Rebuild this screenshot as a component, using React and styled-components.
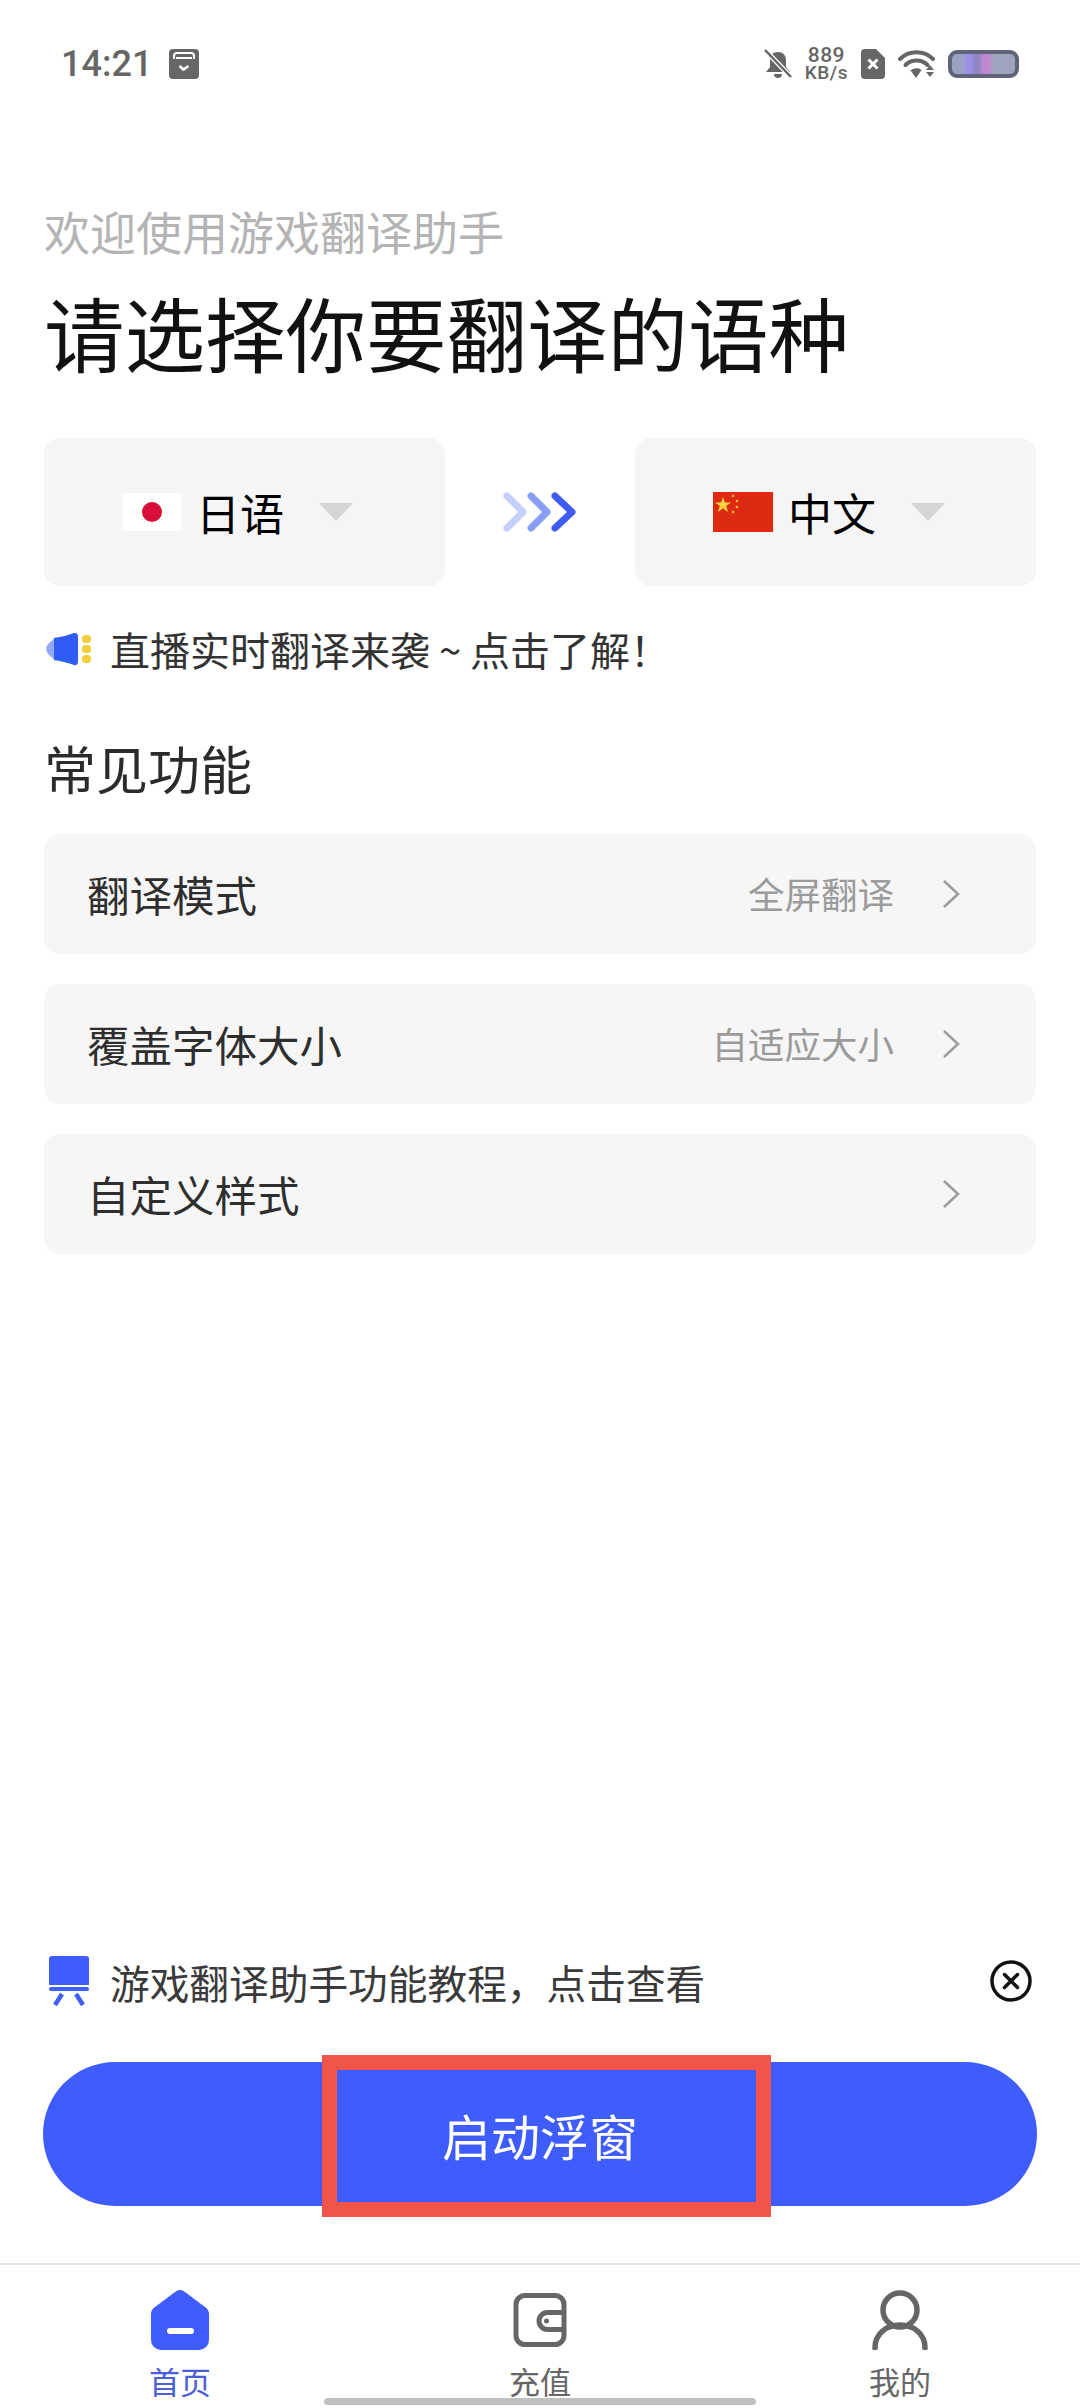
import React from "react";
import styled, { createGlobalStyle } from "styled-components";

const GlobalStyle = createGlobalStyle`
  html, body {
    margin: 0;
    padding: 0;
    background: #fff;
  }
  * {
    box-sizing: border-box;
  }
`;

const CJK = `"Noto Sans CJK SC", "Noto Sans", sans-serif`;

const Page = styled.div`
  position: relative;
  width: 1080px;
  height: 2408px;
  display: flex;
  flex-direction: column;
  background: #fff;
  font-family: ${CJK};
  overflow: hidden;
`;

const StatusBar = styled.div`
  display: flex;
  align-items: center;
  justify-content: space-between;
  height: 30px;
  margin: 49px 61px 0;
  color: #666;
`;

const StatusGroup = styled.div`
  display: flex;
  align-items: center;
  gap: ${(props) => props.$gap || 0}px;
`;

const Clock = styled.span`
  font-family: Roboto, sans-serif;
  font-size: 36px;
  font-weight: 500;
  line-height: 30px;
`;

const Speed = styled.div`
  display: flex;
  flex-direction: column;
  align-items: center;
  font-family: Roboto, sans-serif;
  font-weight: 500;
  font-size: 19px;
  line-height: 17px;
  letter-spacing: 0.5px;
`;

const SpeedTop = styled.span`
  font-size: 21px;
`;

const Battery = styled.div`
  width: 71px;
  height: 28px;
  border: 4px solid #5f6478;
  border-radius: 9px;
  background: linear-gradient(
    90deg,
    #9ba3c4 0 18%,
    #9a90ec 24% 30%,
    #8f84bd 38% 42%,
    #c088d0 50% 58%,
    #a0a5bf 66%
  );
`;

const Main = styled.div`
  flex: 1;
  display: flex;
  flex-direction: column;
  padding: 0 44px;
`;

const Greeting = styled.div`
  margin-top: 121px;
  font-size: 46px;
  line-height: 60px;
  color: #b4b4b4;
`;

const Title = styled.h1`
  margin: 21px 0 0;
  font-size: 80.5px;
  font-weight: 400;
  line-height: 100px;
  color: #111;
  white-space: nowrap;
`;

const LangRow = styled.div`
  display: flex;
  align-items: center;
  justify-content: space-between;
  margin-top: 57px;
`;

const LangCard = styled.div`
  width: 401px;
  height: 148px;
  display: flex;
  align-items: center;
  justify-content: center;
  gap: 15px;
  padding-right: 13px;
  background: #f5f5f6;
  border-radius: 16px;
  font-size: 44px;
  color: #000;
`;

const Caret = styled.span`
  width: 0;
  height: 0;
  margin-left: 20px;
  border-left: 17px solid transparent;
  border-right: 17px solid transparent;
  border-top: 18px solid #d6d6d8;
`;

const Notice = styled.div`
  display: flex;
  align-items: center;
  gap: 18px;
  height: 50px;
  margin-top: 38px;
  font-size: 40px;
  color: #333;
  white-space: nowrap;
`;

const SectionTitle = styled.h2`
  margin: 64px 0 0;
  font-size: 52px;
  font-weight: 400;
  line-height: 60px;
  color: #2b2b2b;
`;

const RowList = styled.div`
  display: flex;
  flex-direction: column;
  gap: 30px;
  margin-top: 36px;
`;

const Row = styled.div`
  height: 120px;
  display: flex;
  align-items: center;
  padding: 0 76px 0 43px;
  background: #f6f6f6;
  border-radius: 16px;
`;

const RowLabel = styled.span`
  flex: 1;
  padding-bottom: 2px;
  font-size: 42.5px;
  color: #2e2e2e;
`;

const RowValue = styled.span`
  margin-right: 48px;
  padding-bottom: 2px;
  font-size: 36.5px;
  color: #9b9b9b;
`;

const Tutorial = styled.div`
  display: flex;
  align-items: center;
  height: 50px;
  margin-top: auto;
  padding-left: 5px;
`;

const TutorialText = styled.span`
  flex: 1;
  margin-left: 21px;
  font-size: 39.7px;
  color: #3a3a3a;
`;

const CloseIcon = styled.svg`
  margin-right: 4px;
`;

const StartButton = styled.div`
  position: relative;
  height: 144px;
  margin: 56px -1px 0;
  display: flex;
  align-items: center;
  justify-content: center;
  background: #3f5cff;
  border-radius: 72px;
  font-size: 49px;
  color: #fff;
`;

const Highlight = styled.div`
  position: absolute;
  top: -7px;
  bottom: -11px;
  left: 279px;
  right: 266px;
  border: 15px solid #f0544a;
`;

const Nav = styled.div`
  display: grid;
  grid-template-columns: repeat(3, 1fr);
  height: 145px;
  margin-top: 57px;
  padding-top: 25px;
  border-top: 2px solid #e2e2e2;
`;

const NavItem = styled.div`
  display: flex;
  flex-direction: column;
  align-items: center;
  color: ${(props) => (props.$active ? "#4a5fd8" : "#666")};
`;

const NavIcon = styled.svg`
  display: block;
`;

const NavLabel = styled.span`
  margin-top: 11px;
  font-size: 31px;
  line-height: 40px;
`;

const HomeBar = styled.div`
  position: absolute;
  left: 324px;
  bottom: 3px;
  width: 432px;
  height: 7px;
  border-radius: 4px;
  background: #bfbfbf;
`;

const CalendarSvg = styled.svg`
  margin-left: 17px;
`;

const MegaphoneSvg = styled.svg`
  margin-left: 2px;
`;

const CalendarIcon = () => (
  <CalendarSvg width="30" height="30" viewBox="0 0 30 30">
    <rect width="30" height="30" rx="4" fill="#666" />
    <path d="M5 10V7a3 3 0 0 1 3-3h14a3 3 0 0 1 3 3v3" fill="none" stroke="#fff" strokeWidth="2" />
    <rect x="7" y="8" width="16" height="2" fill="#fff" />
    <path d="M10.500 17l4 3.500 5-3.500" fill="none" stroke="#fff" strokeWidth="2.600" />
  </CalendarSvg>
);

const BellOffIcon = () => (
  <svg width="28" height="30" viewBox="0 0 28 30">
    <path d="M14 3c-5 0-8 3.500-8 8v7l-4 5h24l-4-5v-7c0-4.500-3-8-8-8z" fill="#666" />
    <path d="M10 25a4 4 0 0 0 8 0z" fill="#666" />
    <path d="M1 1l26 27" stroke="#fff" strokeWidth="5" />
    <path d="M1 1l26 27" stroke="#666" strokeWidth="2.500" />
  </svg>
);

const SimIcon = () => (
  <svg width="24" height="30" viewBox="0 0 24 30">
    <path d="M4 0h11l9 9v17a4 4 0 0 1-4 4H4a4 4 0 0 1-4-4V4a4 4 0 0 1 4-4z" fill="#666" />
    <path d="M7.500 10.500l9 9M16.500 10.500l-9 9" stroke="#fff" strokeWidth="3" />
  </svg>
);

const WifiIcon = () => (
  <svg width="37" height="28" viewBox="0 0 37 28">
    <path d="M2 9c9-9 24-9 33 0" fill="none" stroke="#666" strokeWidth="4" strokeLinecap="round" />
    <path d="M7.500 15c6-6 16-6 22 0" fill="none" stroke="#666" strokeWidth="4" strokeLinecap="round" />
    <path d="M12.500 20.500c3.500-3 8.500-3 11 -0.500L18 28z" fill="#666" />
    <path d="M28 20h8l-4-5zM28 22h8l-4 5z" fill="#666" />
  </svg>
);

const JapanFlag = () => (
  <svg width="58" height="38" viewBox="0 0 58 38">
    <rect width="58" height="38" fill="#fff" />
    <circle cx="29" cy="19" r="10" fill="#d80f36" />
  </svg>
);

const ChinaFlag = () => (
  <svg width="60" height="40" viewBox="0 0 60 40">
    <rect width="60" height="40" fill="#de2a10" />
    <polygon
      points="10,5 12,10.500 18,10.500 13.200,14 15,20 10,16.300 5,20 6.800,14 2,10.500 8,10.500"
      fill="#ffd23c"
    />
    <circle cx="20" cy="4" r="1.300" fill="#ffc23c" />
    <circle cx="24" cy="9" r="1.300" fill="#ffc23c" />
    <circle cx="24" cy="15" r="1.300" fill="#ffc23c" />
    <circle cx="20" cy="20" r="1.300" fill="#ffc23c" />
  </svg>
);

const SwapArrows = () => (
  <svg width="74" height="40" viewBox="0 0 74 40">
    <path d="M4 4l16 16L4 36" fill="none" stroke="#c6cffa" strokeWidth="7" strokeLinecap="round" strokeLinejoin="round" />
    <path d="M28 4l16 16-16 16" fill="none" stroke="#8a9df5" strokeWidth="7" strokeLinecap="round" strokeLinejoin="round" />
    <path d="M52 4l17 16-17 16" fill="none" stroke="#3f5cf0" strokeWidth="7" strokeLinecap="round" strokeLinejoin="round" />
  </svg>
);

const MegaphoneIcon = () => (
  <MegaphoneSvg width="46" height="34" viewBox="0 0 46 34">
    <path d="M10 5L3 11a8 8 0 0 0 0 12l7 6z" fill="#94a8f5" />
    <path d="M8 6c8-1 14-3 20-5 2-.500 4 .500 4 3v26c0 2.500-2 3.500-4 3-6-2-12-4-20-5z" fill="#2f5cf5" />
    <rect x="36" y="3" width="9" height="8" rx="3.500" fill="#f2cf3a" />
    <rect x="36" y="13" width="9" height="8" rx="3.500" fill="#f2cf3a" />
    <rect x="36" y="23" width="9" height="8" rx="3.500" fill="#f2cf3a" />
  </MegaphoneSvg>
);

const Chevron = () => (
  <svg width="18" height="30" viewBox="0 0 18 30">
    <path d="M2 2l14 13L2 28" fill="none" stroke="#9e9e9e" strokeWidth="2.600" />
  </svg>
);

const BoardIcon = () => (
  <svg width="40" height="50" viewBox="0 0 40 50">
    <path d="M3 0h34a3 3 0 0 1 3 3v26H0V3a3 3 0 0 1 3-3z" fill="#3f5cff" />
    <rect y="31" width="40" height="4" rx="2" fill="#3f5cff" />
    <path d="M13 38L6 49M27 38l7 11" stroke="#3f5cff" strokeWidth="4.500" />
  </svg>
);

const HomeIcon = () => (
  <NavIcon width="58" height="60" viewBox="0 0 58 60">
    <path
      d="M24 2a8 8 0 0 1 10 0l20 15a9 9 0 0 1 4 8v25a10 10 0 0 1-10 10H10A10 10 0 0 1 0 50V25a9 9 0 0 1 4-8z"
      fill="#3f5cff"
    />
    <rect x="16" y="38" width="27" height="6" rx="3" fill="#fff" />
  </NavIcon>
);

const WalletIcon = () => (
  <NavIcon width="60" height="60" viewBox="0 0 60 60">
    <rect x="6" y="5.500" width="48" height="49" rx="9" fill="none" stroke="#666" strokeWidth="5" />
    <path d="M54 22.500H37.500a8.500 8.500 0 0 0 0 17H54" fill="none" stroke="#666" strokeWidth="5" />
    <circle cx="36.500" cy="31" r="2.500" fill="#666" />
  </NavIcon>
);

const PersonIcon = () => (
  <NavIcon width="56" height="60" viewBox="0 0 56 60">
    <circle cx="28" cy="20" r="17" fill="none" stroke="#666" strokeWidth="5.500" />
    <path d="M3 58c0-14 11-23 25-23s25 9 25 23" fill="none" stroke="#666" strokeWidth="5.500" strokeLinecap="round" />
  </NavIcon>
);

const rows = [
  { label: "翻译模式", value: "全屏翻译" },
  { label: "覆盖字体大小", value: "自适应大小" },
  { label: "自定义样式" },
];

const App = () => {
  return (
    <Page>
      <GlobalStyle />
      <StatusBar>
        <StatusGroup>
          <Clock>14:21</Clock>
          <CalendarIcon />
        </StatusGroup>
        <StatusGroup $gap={13}>
          <BellOffIcon />
          <Speed>
            <SpeedTop>889</SpeedTop>
            <span>KB/s</span>
          </Speed>
          <SimIcon />
          <WifiIcon />
          <Battery />
        </StatusGroup>
      </StatusBar>
      <Main>
        <Greeting>欢迎使用游戏翻译助手</Greeting>
        <Title>请选择你要翻译的语种</Title>
        <LangRow>
          <LangCard>
            <JapanFlag />
            <span>日语</span>
            <Caret />
          </LangCard>
          <SwapArrows />
          <LangCard>
            <ChinaFlag />
            <span>中文</span>
            <Caret />
          </LangCard>
        </LangRow>
        <Notice>
          <MegaphoneIcon />
          <span>直播实时翻译来袭 ~ 点击了解！</span>
        </Notice>
        <SectionTitle>常见功能</SectionTitle>
        <RowList>
          {rows.map((row) => (
            <Row key={row.label}>
              <RowLabel>{row.label}</RowLabel>
              {row.value && <RowValue>{row.value}</RowValue>}
              <Chevron />
            </Row>
          ))}
        </RowList>
        <Tutorial>
          <BoardIcon />
          <TutorialText>游戏翻译助手功能教程，点击查看</TutorialText>
          <CloseIcon width="42" height="42" viewBox="0 0 42 42">
            <circle cx="21" cy="21" r="19" fill="none" stroke="#111" strokeWidth="3.500" />
            <path d="M14.500 14.500l13 13M27.500 14.500l-13 13" stroke="#111" strokeWidth="3.500" strokeLinecap="round" />
          </CloseIcon>
        </Tutorial>
        <StartButton>
          启动浮窗
          <Highlight />
        </StartButton>
      </Main>
      <Nav>
        <NavItem $active>
          <HomeIcon />
          <NavLabel>首页</NavLabel>
        </NavItem>
        <NavItem>
          <WalletIcon />
          <NavLabel>充值</NavLabel>
        </NavItem>
        <NavItem>
          <PersonIcon />
          <NavLabel>我的</NavLabel>
        </NavItem>
      </Nav>
      <HomeBar />
    </Page>
  );
};

export default App;
